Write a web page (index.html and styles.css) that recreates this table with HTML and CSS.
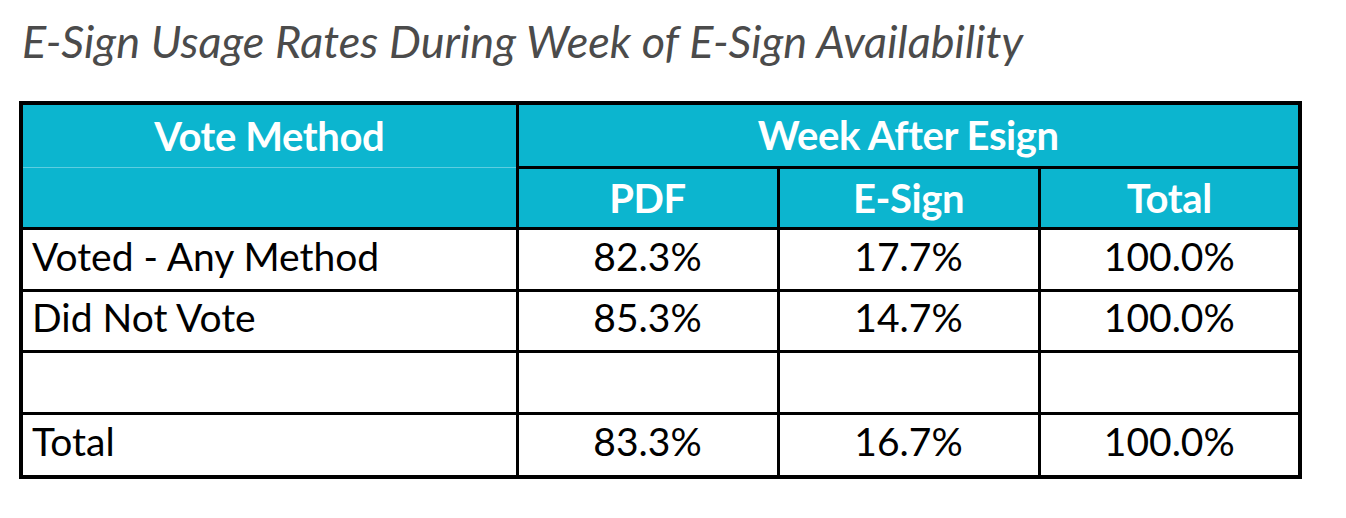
FILE: index.html
```html
<!DOCTYPE html>
<html lang="en">
<head>
<meta charset="utf-8">
<title>E-Sign Usage Rates</title>
<link rel="stylesheet" href="styles.css">
</head>
<body>
<main class="page">
  <h1 class="title">E-Sign Usage Rates During Week of E-Sign Availability</h1>
  <table class="rates">
    <colgroup>
      <col class="c-label">
      <col class="c-num">
      <col class="c-num">
      <col class="c-num">
    </colgroup>
    <thead>
      <tr class="h-row first">
        <th class="h-method">Vote Method</th>
        <th class="h-week" colspan="3">Week After Esign</th>
      </tr>
      <tr class="h-row">
        <th class="h-method-blank"></th>
        <th>PDF</th>
        <th>E-Sign</th>
        <th>Total</th>
      </tr>
    </thead>
    <tbody>
      <tr>
        <td class="label">Voted - Any Method</td>
        <td>82.3%</td>
        <td>17.7%</td>
        <td>100.0%</td>
      </tr>
      <tr>
        <td class="label">Did Not Vote</td>
        <td>85.3%</td>
        <td>14.7%</td>
        <td>100.0%</td>
      </tr>
      <tr>
        <td class="label"></td>
        <td></td>
        <td></td>
        <td></td>
      </tr>
      <tr class="last">
        <td class="label">Total</td>
        <td>83.3%</td>
        <td>16.7%</td>
        <td>100.0%</td>
      </tr>
    </tbody>
  </table>
</main>
</body>
</html>
```
FILE: styles.css
```css
html, body {
  margin: 0;
  padding: 0;
  background: #ffffff;
}

.page {
  padding: 0 0 0 19px;
}

.title {
  margin: 0;
  padding: 14px 0 0 3px;
  height: 101px;
  box-sizing: border-box;
  font-family: "Lato", "Open Sans", sans-serif;
  font-style: italic;
  font-weight: 400;
  font-size: 45px;
  line-height: 54px;
  color: #4b4b4b;
  letter-spacing: 0.04px;
}

.rates {
  border-collapse: collapse;
  border: 4px solid #000;
  width: 1283px;
  table-layout: fixed;
  font-family: "Lato", "Open Sans", sans-serif;
  font-size: 39px;
  color: #000;
}

.c-label { width: 496px; }

.rates th,
.rates td {
  border: 3px solid #000;
  height: 61.5px;
  padding: 0;
  text-align: center;
  vertical-align: middle;
  box-sizing: border-box;
}

.rates tr.first th,
.rates tr.last td {
  height: 64px;
}

.rates th {
  background: #0cb5cf;
  color: #ffffff;
  font-weight: 700;
  font-size: 40px;
  letter-spacing: -0.4px;
}

.rates td {
  padding-bottom: 7px;
}

.rates th.h-method {
  border-bottom: 1px solid #5ecde0;
}

.rates th.h-method-blank {
  border-top: 1px solid #5ecde0;
}

.rates td.label {
  text-align: left;
  padding-left: 9px;
}
```
